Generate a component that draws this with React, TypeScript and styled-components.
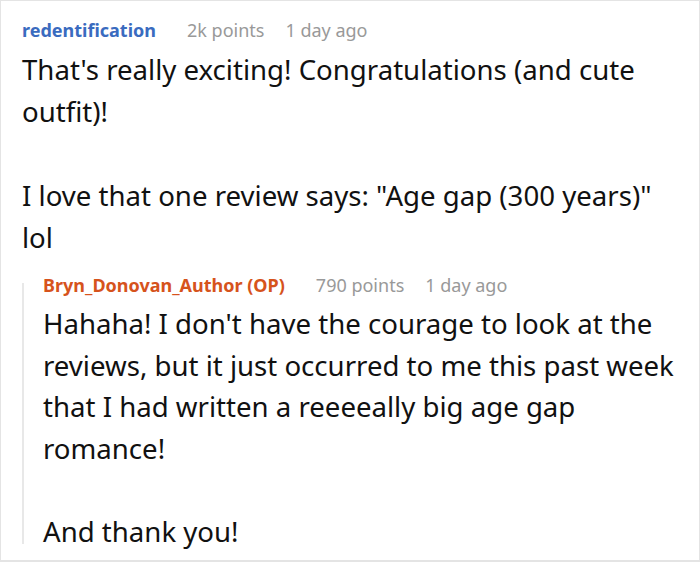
import styled, { createGlobalStyle } from 'styled-components';

const GlobalStyle = createGlobalStyle`
  html, body {
    margin: 0;
    padding: 0;
    background: #ffffff;
  }
  body {
    font-family: 'Noto Sans', 'Open Sans', sans-serif;
    color: #111111;
  }
`;

const Frame = styled.div`
  width: 700px;
  height: 562px;
  box-sizing: border-box;
  border: 1px solid #e4e4e4;
  border-bottom-width: 2px;
  padding: 17px 12px 0 21px;
  overflow: hidden;
  background: #fff;
`;

const Comment = styled.div`
  display: flex;
  flex-direction: column;
`;

const Header = styled.div`
  display: flex;
  align-items: baseline;
  height: 24px;
  line-height: 24px;
  font-size: 18px;
  margin-bottom: 6px;
  white-space: nowrap;
`;

const Author = styled.span<{ $op?: boolean }>`
  font-weight: 700;
  color: ${(p) => (p.$op ? '#d6531c' : '#3a6bbf')};
  margin-right: 31px;
`;

const Meta = styled.span<{ $gap?: number }>`
  color: #999999;
  margin-right: ${(p) => p.$gap ?? 0}px;
`;

const Body = styled.div<{ $line?: number }>`
  font-size: 27.6px;
  line-height: ${(p) => p.$line ?? 42}px;

  p {
    margin: 0 0 ${(p) => p.$line ?? 42}px;
  }
  p:last-child {
    margin-bottom: 0;
  }
`;

const Reply = styled.div`
  position: relative;
  margin-top: 15px;
  padding-left: 21px;

  &::before {
    content: '';
    position: absolute;
    left: 0;
    top: 10px;
    height: 261px;
    width: 2px;
    background: #e8e8e8;
  }
`;

export default function App() {
  return (
    <>
      <GlobalStyle />
      <Frame>
        <Comment>
          <Header>
            <Author>redentification</Author>
            <Meta $gap={21}>2k points</Meta>
            <Meta>1 day ago</Meta>
          </Header>
          <Body>
            <p>That's really exciting! Congratulations (and cute outfit)!</p>
            <p>I love that one review says: "Age gap (300 years)" lol</p>
          </Body>
        </Comment>
        <Reply>
          <Comment>
            <Header>
              <Author $op>Bryn_Donovan_Author (OP)</Author>
              <Meta $gap={21}>790 points</Meta>
              <Meta>1 day ago</Meta>
            </Header>
            <Body $line={41.5}>
              <p>
                Hahaha! I don't have the courage to look at the reviews, but it just occurred to me
                this past week that I had written a reeeeally big age gap romance!
              </p>
              <p>And thank you!</p>
            </Body>
          </Comment>
        </Reply>
      </Frame>
    </>
  );
}
